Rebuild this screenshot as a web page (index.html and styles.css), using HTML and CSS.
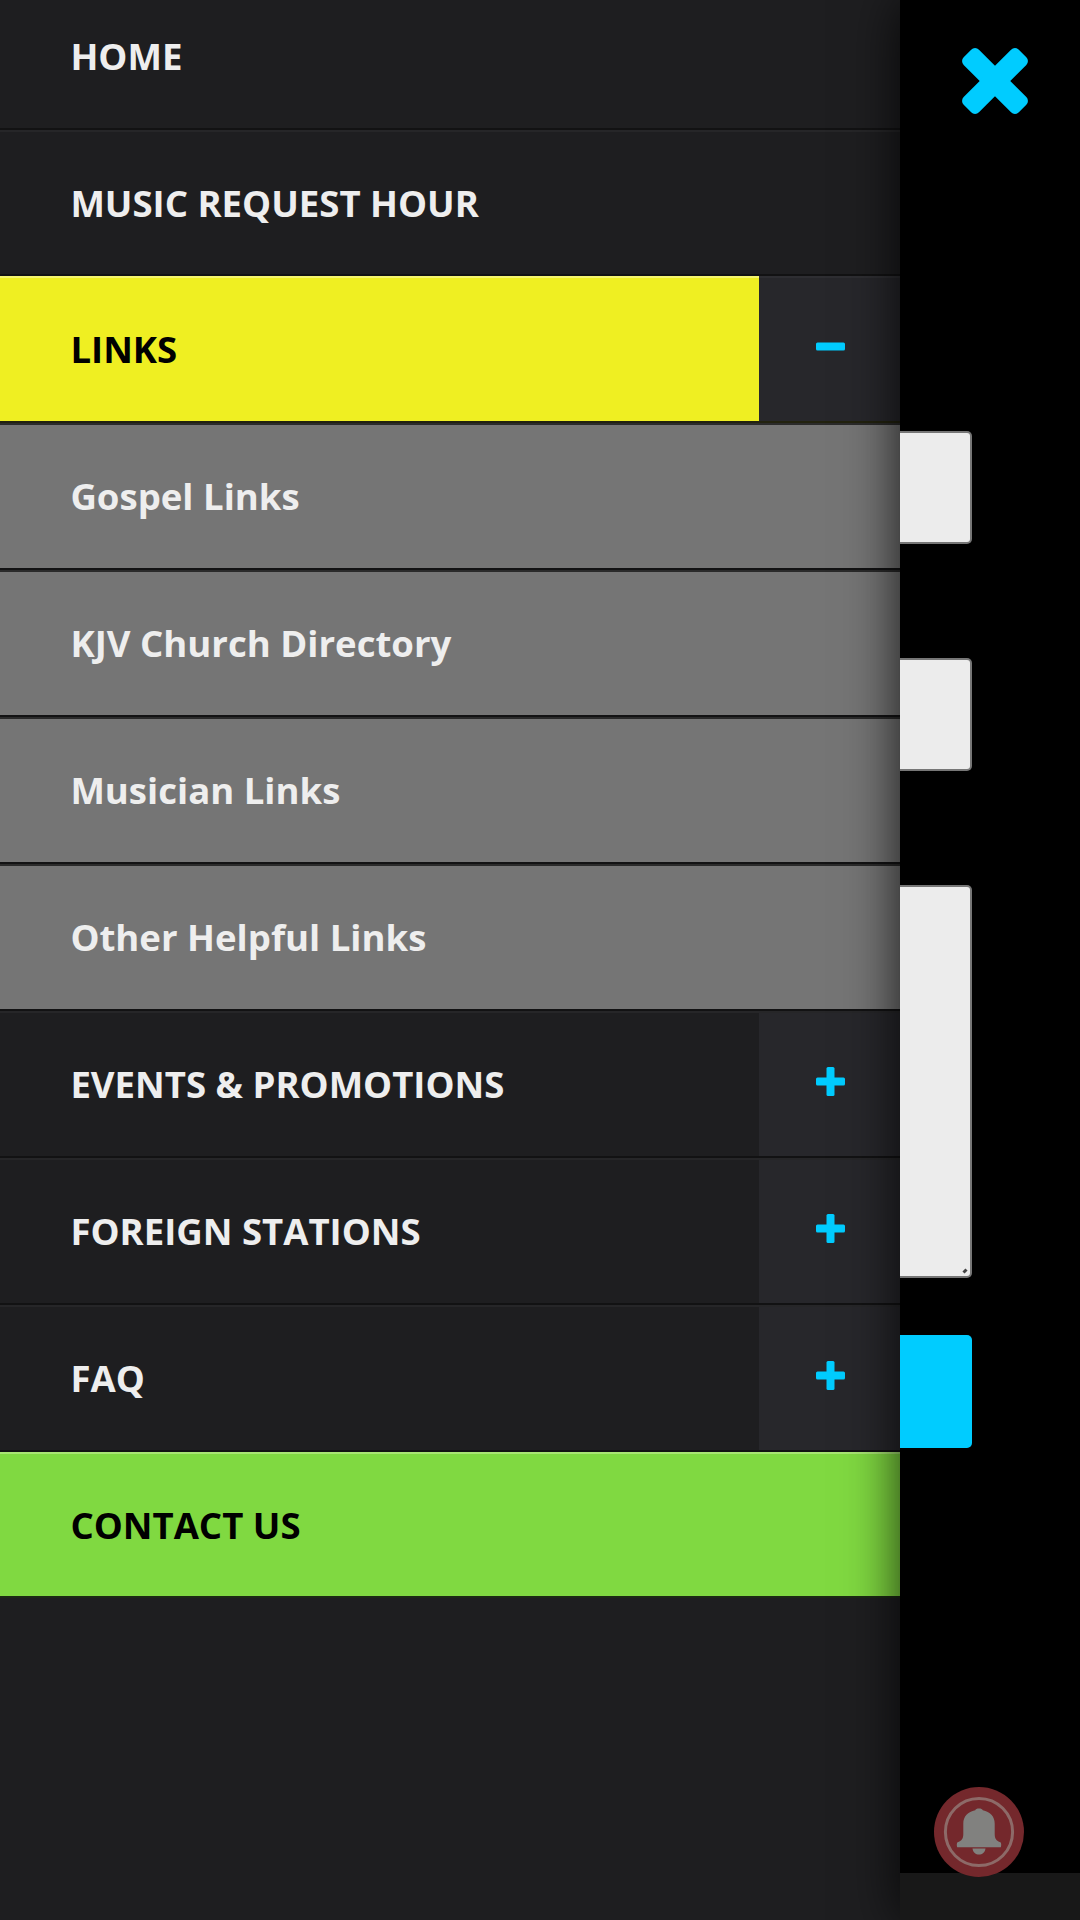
FILE: index.html
```html
<!DOCTYPE html>
<html lang="en">
<head>
<meta charset="utf-8">
<meta name="viewport" content="width=device-width, initial-scale=1">
<title>Contact Us</title>
<link rel="stylesheet" href="styles.css">
</head>
<body>
<div class="wrapper">

	<nav class="menu">
		<ul>
			<li><a href="#">HOME</a></li>
			<li><a href="#">MUSIC REQUEST HOUR</a></li>
			<li class="open">
				<a href="#">LINKS</a>
				<span class="toggle"><svg width="29" height="29" viewBox="0 0 29 29"><rect y="10.5" width="29" height="8" rx="1.5"/></svg></span>
			</li>
			<li class="sub"><a href="#">Gospel Links</a></li>
			<li class="sub"><a href="#">KJV Church Directory</a></li>
			<li class="sub"><a href="#">Musician Links</a></li>
			<li class="sub"><a href="#">Other Helpful Links</a></li>
			<li>
				<a href="#">EVENTS &amp; PROMOTIONS</a>
				<span class="toggle"><svg width="29" height="29" viewBox="0 0 29 29"><rect y="10.5" width="29" height="8" rx="1.5"/><rect x="10.5" width="8" height="29" rx="1.5"/></svg></span>
			</li>
			<li>
				<a href="#">FOREIGN STATIONS</a>
				<span class="toggle"><svg width="29" height="29" viewBox="0 0 29 29"><rect y="10.5" width="29" height="8" rx="1.5"/><rect x="10.5" width="8" height="29" rx="1.5"/></svg></span>
			</li>
			<li>
				<a href="#">FAQ</a>
				<span class="toggle"><svg width="29" height="29" viewBox="0 0 29 29"><rect y="10.5" width="29" height="8" rx="1.5"/><rect x="10.5" width="8" height="29" rx="1.5"/></svg></span>
			</li>
			<li class="current"><a href="#">CONTACT US</a></li>
		</ul>
	</nav>

	<main class="page">
		<div class="close">
			<svg width="66" height="66" viewBox="-33 -33 66 66">
				<rect x="-39" y="-10.8" width="78" height="21.6" rx="5.5" transform="rotate(45)"/>
				<rect x="-39" y="-10.8" width="78" height="21.6" rx="5.5" transform="rotate(-45)"/>
			</svg>
		</div>
		<form class="form">
			<div class="field"></div>
			<div class="field"></div>
			<div class="field message">
				<svg width="6" height="6" viewBox="0 0 6 6"><path d="M1.5 4.5l3-3"/></svg>
			</div>
			<div class="submit"></div>
		</form>
		<footer></footer>
		<!-- notification bell -->
		<div class="bell">
			<svg width="90" height="90" viewBox="0 0 90 90">
				<circle cx="45" cy="45" r="45" fill="#74282c"/>
				<circle cx="45" cy="45" r="33.6" fill="none" stroke="#8d6a68" stroke-width="3"/>
				<path fill="#81817f" d="M45 21.600c2 0 3.400.5 3.800 1.600C56 24.500 60.700 29.500 60.700 36.500V47c0 4.500 1.500 6.800 5.800 8.300.9 1.200.9 3.400.3 4.900H23.200c-.6-1.500-.6-3.700.3-4.900 4.300-1.500 5.800-3.800 5.800-8.300V36.500C29.300 29.500 34 24.500 41.200 23.200 41.600 22.100 43 21.600 45 21.600zM38.500 61.600h13c-.6 4-3.200 6-6.500 6s-5.900-2-6.500-6z"/>
			</svg>
		</div>
	</main>

</div>
</body>
</html>
```
FILE: styles.css
```css
* {
	box-sizing: border-box;
}
body {
	margin: 0;
	background: #000;
	font-family: "Open Sans", "Noto Sans", sans-serif;
}
.wrapper {
	display: flex;
	width: 1080px;
	height: 1920px;
	overflow: hidden;
}

/* side menu */
.menu {
	width: 900px;
	background: #1e1e20;
}
.menu ul {
	list-style: none;
	margin: -17.4px 0 0;
	padding: 0;
}
.menu li {
	display: flex;
	height: 146.9px;
	border-top: 2px solid #262628;
	border-bottom: 2px solid #121213;
}
.menu a {
	flex: 1;
	padding-left: 70.4px;
	color: #eee;
	font-size: 36.55px;
	font-weight: 700;
	line-height: 142px;
	text-decoration: none;
	white-space: nowrap;
}
.menu .sub {
	border-top-color: #2a2a2a;
	background: #757575;
}
.menu .sub a {
	line-height: 143px;
}
.menu .open {
	border-top: 0;
	border-bottom-color: #22220f;
}
.menu .open a {
	border-top: 2px solid #f5f56e;
	background: #efef22;
	color: #000;
}
.menu .open .toggle {
	padding-bottom: 6px;
	border-top: 2px solid #2e2e32;
}
.menu .current {
	border-top-color: #a8e572;
	border-bottom-color: #1c2a14;
	background: #80d941;
}
.menu .current a {
	color: #000;
}
.toggle {
	display: flex;
	justify-content: center;
	align-items: center;
	width: 141px;
	padding: 0 0 5px 2px;
	background: #27272b;
}
.toggle svg {
	fill: #0cf;
}

/* page behind the menu */
.page {
	position: relative;
	display: flex;
	flex-direction: column;
	width: 180px;
	background: #000;
	box-shadow: 0 0 50px rgba(0,0,0,.8);
}
.close {
	height: 431px;
	padding: 48px 0 0 62px;
}
.close svg {
	display: block;
	fill: #0cf;
}
.form {
	flex: 1;
	width: 72px;
}
.field {
	height: 113px;
	margin-bottom: 114px;
	border: 2px solid #767676;
	border-left: 0;
	border-radius: 0 5px 5px 0;
	background: #ececec;
}
.message {
	display: flex;
	justify-content: flex-end;
	align-items: flex-end;
	height: 393px;
	margin-bottom: 56.5px;
	padding: 0 2px 2px 0;
}
.message svg {
	fill: none;
	stroke: #444;
	stroke-width: 3;
}
.submit {
	height: 113px;
	border-radius: 0 5px 5px 0;
	background: #0cf;
}
footer {
	height: 47px;
	background: #181818;
}
.bell {
	position: absolute;
	right: 56px;
	bottom: 43.5px;
}
.bell svg {
	display: block;
}
```
